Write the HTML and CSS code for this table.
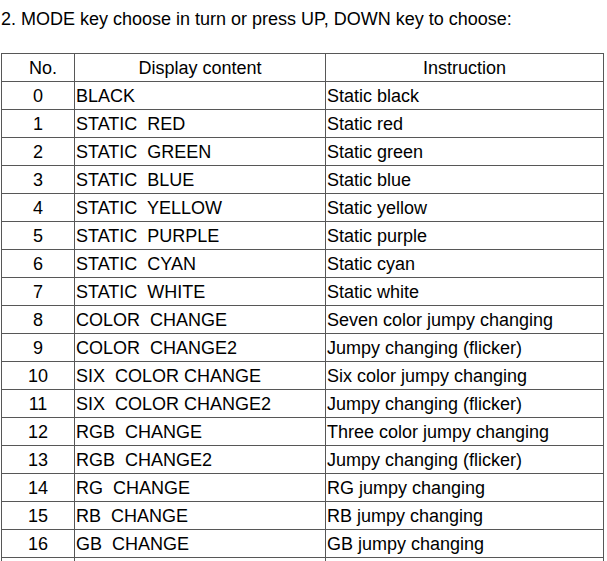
FILE: index.html
```html
<!DOCTYPE html>
<html lang="en">
<head>
<meta charset="utf-8">
<title>MODE key</title>
<link rel="stylesheet" href="styles.css">
</head>
<body>
<main class="page">
  <p class="intro">2. MODE key choose in turn or press UP, DOWN key to choose:</p>
  <div class="table">
    <div class="cell head num head-no">No.</div>
    <div class="cell head">Display content</div>
    <div class="cell head">Instruction</div>

    <div class="cell num">0</div><div class="cell">BLACK</div><div class="cell">Static black</div>
    <div class="cell num">1</div><div class="cell">STATIC  RED</div><div class="cell">Static red</div>
    <div class="cell num">2</div><div class="cell">STATIC  GREEN</div><div class="cell">Static green</div>
    <div class="cell num">3</div><div class="cell">STATIC  BLUE</div><div class="cell">Static blue</div>
    <div class="cell num">4</div><div class="cell">STATIC  YELLOW</div><div class="cell">Static yellow</div>
    <div class="cell num">5</div><div class="cell">STATIC  PURPLE</div><div class="cell">Static purple</div>
    <div class="cell num">6</div><div class="cell">STATIC  CYAN</div><div class="cell">Static cyan</div>
    <div class="cell num">7</div><div class="cell">STATIC  WHITE</div><div class="cell">Static white</div>
    <div class="cell num">8</div><div class="cell">COLOR  CHANGE</div><div class="cell">Seven color jumpy changing</div>
    <div class="cell num">9</div><div class="cell">COLOR  CHANGE2</div><div class="cell">Jumpy changing (flicker)</div>
    <div class="cell num">10</div><div class="cell">SIX  COLOR CHANGE</div><div class="cell">Six color jumpy changing</div>
    <div class="cell num">11</div><div class="cell">SIX  COLOR CHANGE2</div><div class="cell">Jumpy changing (flicker)</div>
    <div class="cell num">12</div><div class="cell">RGB  CHANGE</div><div class="cell">Three color jumpy changing</div>
    <div class="cell num">13</div><div class="cell">RGB  CHANGE2</div><div class="cell">Jumpy changing (flicker)</div>
    <div class="cell num">14</div><div class="cell">RG  CHANGE</div><div class="cell">RG jumpy changing</div>
    <div class="cell num">15</div><div class="cell">RB  CHANGE</div><div class="cell">RB jumpy changing</div>
    <div class="cell num">16</div><div class="cell">GB  CHANGE</div><div class="cell">GB jumpy changing</div>
    <div class="cell num"></div><div class="cell"></div><div class="cell"></div>
  </div>
</main>
</body>
</html>
```
FILE: styles.css
```css
html, body {
  margin: 0;
  padding: 0;
  background: #ffffff;
  overflow: hidden;
}

.page {
  height: 561px;
  overflow: hidden;
  padding: 0 0 0 1px;
  font-family: "Liberation Sans", Arial, sans-serif;
  font-size: 18px;
  color: #000000;
}

.intro {
  margin: 9px 0 23px 0;
  line-height: 21px;
}

.table {
  display: grid;
  grid-template-columns: 73px 251px 278px;
  width: 602px;
  border-left: 1px solid #575757;
  border-top: 1px solid #575757;
}

.cell {
  box-sizing: border-box;
  height: 28px;
  padding-top: 2px;
  line-height: 25px;
  padding-left: 1px;
  border-right: 1px solid #575757;
  border-bottom: 1px solid #575757;
  white-space: pre;
  overflow: hidden;
}

.head {
  text-align: center;
  padding-left: 0;
}

.num {
  text-align: center;
  padding-left: 0;
}

.head-no {
  padding-left: 10px;
}
```
